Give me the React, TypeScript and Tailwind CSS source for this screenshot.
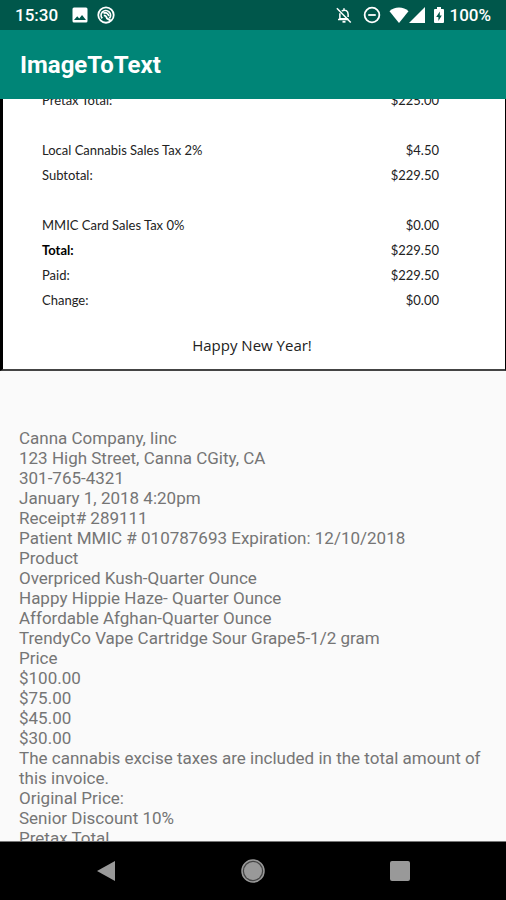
const receiptRows = [
  { label: 'Pretax Total:', amount: '$225.00' },
  null,
  { label: 'Local Cannabis Sales Tax 2%', amount: '$4.50' },
  { label: 'Subtotal:', amount: '$229.50' },
  null,
  { label: 'MMIC Card Sales Tax 0%', amount: '$0.00' },
  { label: 'Total:', amount: '$229.50', bold: true },
  { label: 'Paid:', amount: '$229.50' },
  { label: 'Change:', amount: '$0.00' },
];

const recognizedLines = [
  'Canna Company, linc',
  '123 High Street, Canna CGity, CA',
  '301-765-4321',
  'January 1, 2018 4:20pm',
  'Receipt# 289111',
  'Patient MMIC # 010787693 Expiration: 12/10/2018',
  'Product',
  'Overpriced Kush-Quarter Ounce',
  'Happy Hippie Haze- Quarter Ounce',
  'Affordable Afghan-Quarter Ounce',
  'TrendyCo Vape Cartridge Sour Grape5-1/2 gram',
  'Price',
  '$100.00',
  '$75.00',
  '$45.00',
  '$30.00',
  'The cannabis excise taxes are included in the total amount of this invoice.',
  'Original Price:',
  'Senior Discount 10%',
  'Pretax Total',
];

const StatusBar = () => (
  <div className="flex h-[30px] shrink-0 items-center justify-between bg-[#00574b] px-[15px] text-white">
    <div className="flex items-center">
      <span className="w-14 text-[17px] leading-5 font-medium">15:30</span>
      {/* picture notification */}
      <svg className="h-[18px] w-[18px]" viewBox="0 0 24 24" fill="currentColor">
        <path d="M22 20V4a2 2 0 0 0-2-2H4a2 2 0 0 0-2 2v16a2 2 0 0 0 2 2h16a2 2 0 0 0 2-2zM8.300 13.500l2.700 3.200 3.700-4.800L20 18.500H4z" fillRule="evenodd" />
      </svg>
      <svg className="ml-2 h-[18px] w-[18px]" viewBox="0 0 24 24" fill="none" stroke="currentColor" strokeWidth="2.400">
        <circle cx="12" cy="12" r="10.300" />
        <path d="M7 16.500a6.300 6.300 0 1 1 9.500 0" />
        <path d="M8.500 9.500c3.500-1.500 6.500.5 7.500 4M9 12.500c2 0 3.500 1 4.200 4l5 3" />
      </svg>
    </div>

    <div className="flex items-center">
      {/* notifications off */}
      <svg className="mr-2.5 h-[18px] w-[18px]" viewBox="0 0 24 24" fill="none" stroke="currentColor" strokeWidth="2">
        <path d="M6.500 9.500V17h11M9 6.600c5-2.800 8.500.4 8.500 4.400v3.500M4 18h14M12 3v3" />
        <path d="M2.500 3l18.500 19" />
        <path d="M10 21h4" strokeWidth="2.500" />
      </svg>
      {/* do not disturb */}
      <svg className="mr-2 h-[18px] w-[18px]" viewBox="0 0 24 24" fill="none" stroke="currentColor" strokeWidth="2.400">
        <circle cx="12" cy="12" r="9.800" />
        <path d="M7 12h10" />
      </svg>
      <svg className="h-4 w-5" viewBox="0 0 20 16" fill="currentColor">
        <path d="M10 16L.5 4.200C3 1.800 6.300.5 10 .5s7 1.300 9.500 3.700z" />
      </svg>
      <svg className="mr-2 h-4 w-4" viewBox="0 0 16 16" fill="currentColor">
        <path d="M16 0v16H0z" />
      </svg>
      <svg className="mr-1 h-4 w-3" viewBox="0 0 12 16" fill="currentColor">
        <path fillRule="evenodd" d="M4 0h4v2h2q1 0 1 1v12q0 1-1 1H2q-1 0-1-1V3q0-1 1-1h2zM6.800 4.500L3.200 10h2.200v4L8.800 8.500h-2z" />
      </svg>
      <span className="text-[17px] leading-5 font-medium">100%</span>
    </div>
  </div>
);

const Receipt = () => (
  <section className="flex h-68 flex-col justify-end overflow-hidden border-r border-b-2 border-l-3 border-r-black border-b-[#444] border-l-black bg-white text-[#222]">
    <table className="w-full shrink-0 font-[Lato,sans-serif] text-[13px] leading-[25px]">
      <tbody>
        {receiptRows.map((row, i) =>
          row ? (
            <tr key={i} className="h-[25px]">
              <td className={row.bold ? 'pl-[39px] font-bold text-black' : 'pl-[39px]'}>{row.label}</td>
              <td className="pr-[66px] text-right">{row.amount}</td>
            </tr>
          ) : (
            <tr key={i} className="h-[25px]">
              <td colSpan={2} />
            </tr>
          )
        )}
      </tbody>
    </table>
    <p className="mt-5 mb-3 shrink-0 pr-1 text-center font-['Open_Sans',sans-serif] text-[15px] leading-6">Happy New Year!</p>
  </section>
);

const NavigationBar = () => (
  <nav className="grid h-[59px] shrink-0 grid-cols-3 border-t border-[#777] bg-black px-8 text-[#999]">
    <button type="button" aria-label="Back" className="flex items-center justify-center">
      <svg className="h-5 w-[18px]" viewBox="0 0 18 20" fill="currentColor">
        <path d="M18 0v20L0 10z" />
      </svg>
    </button>
    <button type="button" aria-label="Home" className="flex items-center justify-center">
      <svg className="h-6 w-6" viewBox="0 0 24 24">
        <circle cx="12" cy="12" r="11" fill="#444" stroke="currentColor" strokeWidth="1.500" />
        <circle cx="12" cy="12" r="9" fill="currentColor" />
      </svg>
    </button>
    <button type="button" aria-label="Recent apps" className="flex items-center justify-center">
      <span className="h-5 w-5 rounded-xs bg-[#999]" />
    </button>
  </nav>
);

const App = () => (
  <div className="flex h-screen flex-col overflow-hidden bg-[#fafafa] font-[Roboto,sans-serif]">
    <StatusBar />
    <header className="flex h-[69px] shrink-0 items-center bg-[#008577] px-5">
      <h1 className="text-2xl leading-8 font-bold text-white">ImageToText</h1>
    </header>
    <main className="min-h-0 flex-1 overflow-hidden">
      <Receipt />
      <div className="mt-[57px] pr-4 pl-[19px] text-[17px] leading-5 text-[#757575]">
        {recognizedLines.map((line) => (
          <p key={line}>{line}</p>
        ))}
      </div>
    </main>
    <NavigationBar />
  </div>
);

export default App;
